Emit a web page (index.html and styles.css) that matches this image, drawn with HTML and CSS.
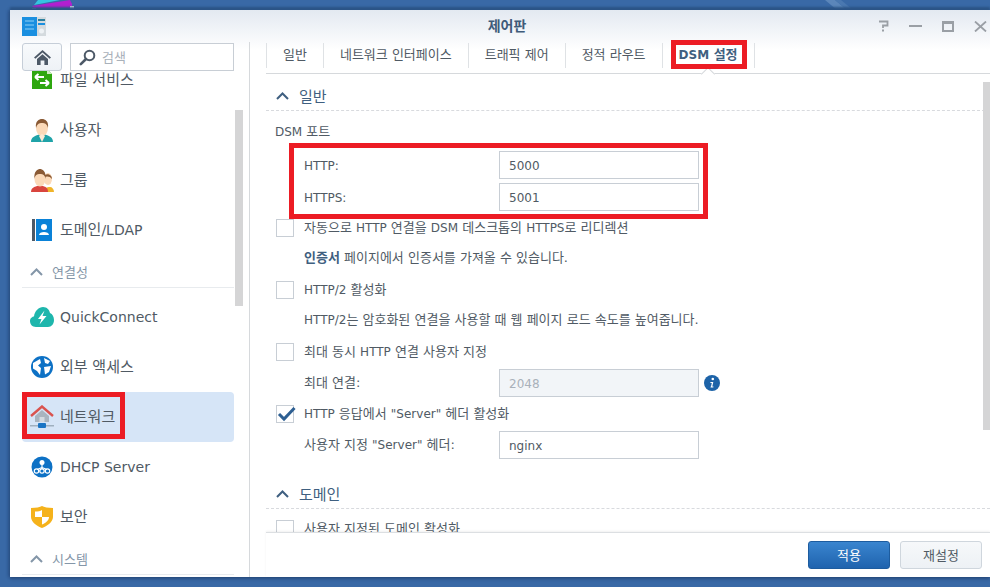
FILE: index.html
```html
<!DOCTYPE html>
<html lang="ko">
<head>
<meta charset="utf-8">
<title>제어판</title>
<link rel="stylesheet" href="styles.css">
</head>
<body>
<svg class="art art-a" width="44" height="10" viewBox="0 0 44 10"><path d="M0 6 L38 0 L40 4 L40 8 L2 8Z" fill="#b21fd0"/><path d="M2 5 L28 0 L6 0Z" fill="#35c4e0"/><path d="M0 8 H4 V10 H0Z M38 6 H42 V10 H38Z" fill="#dfe6ee"/></svg>
<svg class="art art-b" width="36" height="10" viewBox="0 0 36 10"><path d="M0 0 H10 L22 10 H12Z" fill="#5b86ba"/><path d="M10 0 H16 L28 10 H22Z" fill="#4a78b0"/></svg>
<div class="window">
<header class="titlebar">
<svg class="logo" width="24" height="20" viewBox="0 0 24 20"><rect x="0" y="1" width="15" height="19" fill="#1a8fe0"/><path d="M3 5 H12 M3 9 H12 M3 13 H12" stroke="#8fd0f5" stroke-width="1"/><rect x="15" y="1" width="9" height="19" fill="#d4dade"/><path d="M16 4 H23" stroke="#2a7f9e" stroke-width="2"/><path d="M16 8 H23" stroke="#1a8fe0" stroke-width="2"/><circle cx="19.5" cy="15" r="2.5" fill="#eef2f5"/></svg>
<span class="wtitle">제어판</span>
<span class="wctl">
<svg width="11" height="12" viewBox="0 0 11 12"><path d="M1 1.5 H9.5 V5.5 H5 V8" fill="none" stroke="#9a9fa5" stroke-width="1.8"/><rect x="4" y="9.5" width="2" height="2" fill="#9a9fa5"/></svg>
<svg width="13" height="12" viewBox="0 0 13 12"><rect x="0" y="5" width="13" height="2" fill="#9a9fa5"/></svg>
<svg width="12" height="11" viewBox="0 0 12 11"><path d="M0 0 H12 V11 H0Z M2 3 V9 H10 V3Z" fill="#9a9fa5" fill-rule="evenodd"/></svg>
<svg width="13" height="11" viewBox="0 0 13 11"><path d="M1 0.5 L12 10.5 M12 0.5 L1 10.5" stroke="#9a9fa5" stroke-width="1.8"/></svg>
</span>
</header>
<div class="body">
<aside class="side">
<div class="side-top">
<button class="home"><svg width="17" height="17" viewBox="0 0 17 17"><path d="M8.5 1 L17 8.6 L15.6 9.8 L8.5 3.6 L1.4 9.8 L0 8.6Z M3 10 L8.5 5.2 L14 10 V16 H10.4 V11.6 H6.6 V16 H3Z" fill="#4d5967"/></svg></button>
<div class="search"><svg width="17" height="17" viewBox="0 0 17 17"><circle cx="10.5" cy="6.5" r="4.8" fill="none" stroke="#4d5967" stroke-width="2"/><path d="M7 10 L1.8 15.2" stroke="#4d5967" stroke-width="2.6" stroke-linecap="round"/></svg><span>검색</span></div>
</div>
<div class="list-wrap">
<div class="list">
<div class="item"><svg class="ic" width="24" height="24" viewBox="0 0 24 24"><path d="M2 1 H17 L22 6 V21 H2Z" fill="#2ea70f"/><path d="M17 1 L22 6 H17Z" fill="#cdeec0"/><path d="M5 9 H14 M5 9 L8.500 6 M5 9 L8.500 12 M19 15 H10 M19 15 L15.500 12 M19 15 L15.500 18" stroke="#fff" stroke-width="2" fill="none"/></svg><span>파일 서비스</span></div>
<div class="item"><svg class="ic" width="24" height="24" viewBox="0 0 24 24"><path d="M1 24 C1 19 5 18 9 16.5 H15 C19 18 23 19 23 24Z" fill="#1fa3a8"/><ellipse cx="12" cy="10" rx="6" ry="8" fill="#fbd9b8"/><path d="M12 16 L9 18 L12 24 L15 18Z" fill="#fde9d4"/><path d="M6 10 C5 3 9 1 12 1 C15 1 19 3 18 10 C17 6 15 5 12 5 C9 5 7 6 6 10Z" fill="#8a5a35"/></svg><span>사용자</span></div>
<div class="item"><svg class="ic" width="24" height="24" viewBox="0 0 24 24"><path d="M14 24 C14 20 17 19 20 19 C22 19 24 21 24 24Z" fill="#f0b429"/><ellipse cx="18" cy="11" rx="4" ry="6" fill="#fbd9b8"/><path d="M14 9 C14 5 22 5 22 11 C20 8 17 8 14 9Z" fill="#8a5a35"/><path d="M1 24 C1 20 4 19 7 18 H13 C16 19 18 20 18 24Z" fill="#d9453e"/><ellipse cx="10" cy="11" rx="5.5" ry="7.5" fill="#fbd9b8"/><path d="M4.5 11 C3.5 3 8 1 10 1 C12 1 16.5 3 15.5 11 C15 7 13 6 10 6 C7 6 5 7 4.5 11Z" fill="#8a5a35"/></svg><span>그룹</span></div>
<div class="item"><svg class="ic" width="24" height="24" viewBox="0 0 24 24"><rect x="2" y="1" width="3" height="22" fill="#4d5967"/><rect x="6" y="1" width="16" height="22" fill="#0a82d8"/><circle cx="14" cy="9" r="3" fill="#fff"/><path d="M9 17 C9 13 19 13 19 17Z" fill="#fff"/></svg><span>도메인<span class="l">/LDAP</span></span></div>
<div class="group"><svg width="13" height="8" viewBox="0 0 13 8"><path d="M1 7 L6.5 1.5 L12 7" fill="none" stroke="#8496a8" stroke-width="2"/></svg><span>연결성</span></div>
<div class="item"><svg class="ic" width="24" height="24" viewBox="0 0 24 24"><path d="M6 22 C2 22 0 19 0 16 C0 13 2.5 11.5 4 11.5 C4.5 6 9 2 13 2 C17 2 19.5 5 20 8 C22.5 9 24 12 24 15 C24 19 21.5 22 18 22Z" fill="#1eb6ac"/><path d="M14.5 5.5 L8 14 H11.5 L9.5 19.5 L16.5 11 H12.5Z" fill="#fff"/></svg><span class="l">QuickConnect</span></div>
<div class="item"><svg class="ic" width="24" height="24" viewBox="0 0 24 24"><circle cx="12" cy="12" r="11" fill="#0d71c5"/><path d="M3 8 L10 4 L11 8 L8 10.5 L11 13 L10 20 L7 16 L3 13.5Z M14 3 L20 6 L18 9 L15 8Z M14 12 L21 11 L19 17 L15 19.5Z" fill="#fff"/></svg><span>외부 액세스</span></div>
<div class="item active"><svg class="ic" width="24" height="24" viewBox="0 0 24 24"><path d="M1 11 L12 1.5 L23 11" fill="none" stroke="#d9534f" stroke-width="2.4"/><path d="M5 11 L12 5 L19 11 V17 H5Z" fill="#a9b4bf"/><rect x="9.5" y="12" width="5" height="5" fill="#d3dae1"/><rect x="0" y="20" width="24" height="1.5" fill="#9fb0bf"/><rect x="8" y="18" width="8" height="5" rx="1" fill="#1b75c4"/></svg><span>네트워크</span></div>
<div class="item"><svg class="ic" width="24" height="24" viewBox="0 0 24 24"><circle cx="12" cy="12" r="10.5" fill="#0d71c5"/><circle cx="12" cy="7.5" r="2.5" fill="#fff"/><path d="M12 9 V14 M12 12.5 L7 14.5 M12 12.5 L17 14.5" stroke="#fff" stroke-width="1.2" fill="none"/><circle cx="6.5" cy="16" r="2.2" fill="none" stroke="#fff" stroke-width="1.2"/><circle cx="12" cy="16" r="2.2" fill="none" stroke="#fff" stroke-width="1.2"/><circle cx="17.5" cy="16" r="2.2" fill="none" stroke="#fff" stroke-width="1.2"/></svg><span class="l">DHCP Server</span></div>
<div class="item"><svg class="ic" width="24" height="24" viewBox="0 0 24 24"><path d="M1 3 C6 3 10 2 12 1 C14 2 18 3 23 3 V12 C23 17 17 21 12 23 C7 21 1 17 1 12Z" fill="#f5b21b"/><path d="M12 5 V12 H5 V6.5 C8 6.5 10.5 6 12 5Z M12 12 H19 C19 15.5 15.5 18 12 19.5Z" fill="#fff"/></svg><span>보안</span></div>
<div class="group"><svg width="13" height="8" viewBox="0 0 13 8"><path d="M1 7 L6.5 1.5 L12 7" fill="none" stroke="#8496a8" stroke-width="2"/></svg><span>시스템</span></div>
</div>
<div class="thumb"></div>
</div>
</aside>
<main class="main">
<nav class="tabs">
<span class="tab">일반</span><span class="tab">네트워크 인터페이스</span><span class="tab">트래픽 제어</span><span class="tab">정적 라우트</span><span class="tab cur"><span class="l">DSM</span> 설정</span>
</nav>
<div class="scroll">
<h2 class="sec"><svg width="13" height="8" viewBox="0 0 13 8"><path d="M1 7 L6.5 1.5 L12 7" fill="none" stroke="#3f5f80" stroke-width="2"/></svg><span>일반</span></h2>
<div class="label-top"><span class="l">DSM</span> 포트</div>
<div class="row"><label class="l">HTTP:</label><div class="inp">5000</div></div>
<div class="row"><label class="l">HTTPS:</label><div class="inp">5001</div></div>
<div class="chk"><i class="box"></i><span>자동으로 <span class="l">HTTP</span> 연결을 <span class="l">DSM</span> 데스크톱의 <span class="l">HTTPS</span>로 리디렉션</span></div>
<p class="note"><b>인증서</b> 페이지에서 인증서를 가져올 수 있습니다.</p>
<div class="chk"><i class="box"></i><span><span class="l">HTTP/2</span> 활성화</span></div>
<p class="note"><span class="l">HTTP/2</span>는 암호화된 연결을 사용할 때 웹 페이지 로드 속도를 높여줍니다.</p>
<div class="chk"><i class="box"></i><span>최대 동시 <span class="l">HTTP</span> 연결 사용자 지정</span></div>
<div class="row"><label>최대 연결:</label><div class="inp off">2048</div><svg class="info" width="16" height="16" viewBox="0 0 16 16"><circle cx="8" cy="8" r="8" fill="#1d63a8"/><circle cx="8.8" cy="4" r="1.3" fill="#fff"/><path d="M6.5 7 H9.3 L8.3 11.5 H9.5 L9.3 12.5 H6.5 L6.7 11.5 H7 L7.8 8 H6.3Z" fill="#fff"/></svg></div>
<div class="chk"><i class="box"><svg width="20" height="16" viewBox="0 0 20 16"><path d="M2 8 L7 13 L17.5 2" fill="none" stroke="#2d5f92" stroke-width="3"/></svg></i><span><span class="l">HTTP</span> 응답에서 <span class="l">"Server"</span> 헤더 활성화</span></div>
<div class="row"><label>사용자 지정 <span class="l">"Server"</span> 헤더:</label><div class="inp">nginx</div></div>
<h2 class="sec sec2"><svg width="13" height="8" viewBox="0 0 13 8"><path d="M1 7 L6.5 1.5 L12 7" fill="none" stroke="#3f5f80" stroke-width="2"/></svg><span>도메인</span></h2>
<div class="chk chk-cut"><i class="box"></i><span>사용자 지정된 도메인 활성화</span></div>
<div class="vthumb"></div>
</div>
<footer class="foot"><button class="btn pri">적용</button><button class="btn">재설정</button></footer>
</main>
</div>
<div class="mark mark-net"></div>
<div class="mark mark-tab"></div>
<div class="mark mark-port"></div>
</div>
</body>
</html>
```
FILE: styles.css
```css
* { box-sizing: border-box; }
html, body { margin: 0; height: 100%; }
body {
  position: relative;
  overflow: hidden;
  background: #3969a6;
  font-family: "DejaVu Sans", "Noto Sans CJK KR", sans-serif;
  font-size: 13px;
  color: #505a64;
}
.l { font-size: 12px; }
.art { position: absolute; top: 0; }
.art-a { left: 32px; }
.art-b { left: 825px; }

.window {
  position: absolute;
  left: 10px; top: 10px; right: 0; bottom: 10px;
  background: linear-gradient(#e3e9f1, #fff 40px);
  display: flex;
  flex-direction: column;
  box-shadow: 0 -3px 2px #2b5486, 0 2px 3px rgba(20,40,80,.4), -2px 0 3px rgba(20,40,80,.25);
}
.titlebar {
  flex: none; height: 32px;
  display: grid; grid-template-columns: 1fr auto 1fr; align-items: start;
  padding: 6px 3px 0 12px;
}
.logo { display: block; }
.wtitle { font-size: 14px; font-weight: 700; color: #3f5b7a; line-height: 20px; margin-left: 5px; }
.wctl { justify-self: end; margin-top: 4px; display: flex; gap: 20px; align-items: center; }

.body { flex: 1; min-height: 0; display: flex; }
.side { width: 240px; flex: none; border-right: 1px solid #d6d9dc; display: flex; flex-direction: column; }
.side-top { flex: none; display: flex; gap: 8px; padding: 1px 15px 0 12px; height: 29px; }
.home {
  width: 40px; height: 28px; padding: 0;
  border: 1px solid #c6ced8; border-radius: 3px;
  background: linear-gradient(#f8fafc, #eef2f6);
  display: flex; align-items: center; justify-content: center;
}
.search {
  flex: 1; height: 28px; border: 1px solid #c8ced5;
  background: #fff; display: flex; align-items: center; gap: 6px; padding-left: 8px;
  color: #a9b1ba;
}
.search span { padding-bottom: 2px; }
.list-wrap { flex: 1; position: relative; overflow: hidden; }
.list { margin: -16px 15px 0 12px; }
.item {
  height: 50px; display: flex; align-items: center; padding-left: 8px;
  font-size: 15px; color: #505a64; border-radius: 4px;
}
.item .l { font-size: 14px; }
.item > span:not(.l) { padding-bottom: 3px; }
.item .ic { flex: none; margin-right: 6px; }
.item.active { background: #d6e5f7; }
.group {
  height: 33px; margin-bottom: 4px; display: flex; align-items: center; gap: 9px; padding: 1px 0 0 8px;
  font-size: 13px; color: #8496a8; border-bottom: 1px solid #e8ebee;
}
.thumb { position: absolute; right: 6px; top: 39px; width: 8px; height: 196px; background: #d5d5d6; }

.main { flex: 1; min-width: 0; display: flex; flex-direction: column; padding-left: 16px; }
.tabs { flex: none; height: 32px; display: flex; align-items: flex-start; border-bottom: 1px solid #d6d9dc; position: relative; }
.tab {
  height: 25px; line-height: 24px; padding: 0 16px; margin-top: 1px;
  border-left: 1px solid #dfe2e5; color: #505a64; white-space: nowrap;
}
.tab.cur { font-weight: 700; color: #3f5f80; border-right: 1px solid #dfe2e5; }
.tab.cur::after {
  content: ""; position: absolute; left: 437px; bottom: -6px; width: 9px; height: 9px;
  transform: rotate(45deg); background: #fff;
  border-left: 1px solid #d6d9dc; border-top: 1px solid #d6d9dc;
}
.scroll { flex: 1; position: relative; overflow: hidden; min-height: 0; }
.sec {
  margin: 0; height: 37px; border-bottom: 1px dashed #d8dade;
  display: flex; align-items: center; gap: 10px; padding: 7px 0 0 10px;
  font-size: 15px; font-weight: 400; color: #3f5f80;
}
.label-top { height: 16px; margin: 13px 0 9px 9px; line-height: 16px; }
.row { height: 32px; display: flex; align-items: center; padding-left: 38px; }
.row label { width: 195px; flex: none; white-space: nowrap; padding-bottom: 3px; }
.row label.l { padding: 2px 0 0; }
.inp {
  width: 200px; height: 28px; border: 1px solid #c8ced5; padding-left: 9px;
  line-height: 28px; color: #505a64; background: #fff; font-size: 12px;
}
.inp.off { background: #f2f5f8; color: #a9b1ba; }
.info { margin-left: 5px; }
.chk { height: 30px; display: flex; align-items: center; padding-left: 10px; gap: 10px; white-space: nowrap; }
.chk > span { padding-bottom: 3px; }
.chk-cut { margin-top: 5px; }
.box { position: relative; flex: none; width: 18px; height: 18px; border: 1px solid #c8ced5; background: #fff; }
.box svg { position: absolute; left: 0; top: 0; }
.note { margin: 0; height: 32px; line-height: 30px; padding-left: 38px; }
.note b { color: #3f5f80; }
.sec2 { margin-top: 11px; }
.vthumb { position: absolute; right: 0; top: 8px; width: 7px; height: 348px; background: #d5d5d6; }
.foot {
  height: 45px; flex: none; border-top: 1px solid #dcdfe2; box-shadow: 0 -1px 2px rgba(0,0,0,.06);
  display: flex; justify-content: flex-end; gap: 10px; padding: 8px 8px 0 0; background: #fff; position: relative;
}
.btn {
  width: 82px; height: 28px; padding: 0 0 2px; border: 1px solid #cfd6dd; border-radius: 3px;
  background: linear-gradient(#f6f8fa, #edf1f5); color: #505a64; font: inherit;
}
.btn.pri { background: linear-gradient(#3a85cf, #1f63ae); border-color: #1d5c9f; color: #fff; }

.mark { position: absolute; border: 5px solid #ec1c24; z-index: 5; }
.mark-net { left: 12px; top: 382px; width: 103px; height: 47px; }
.mark-tab { left: 661px; top: 30px; width: 76px; height: 29px; }
.mark-port { left: 279px; top: 133px; width: 419px; height: 76px; }
```
